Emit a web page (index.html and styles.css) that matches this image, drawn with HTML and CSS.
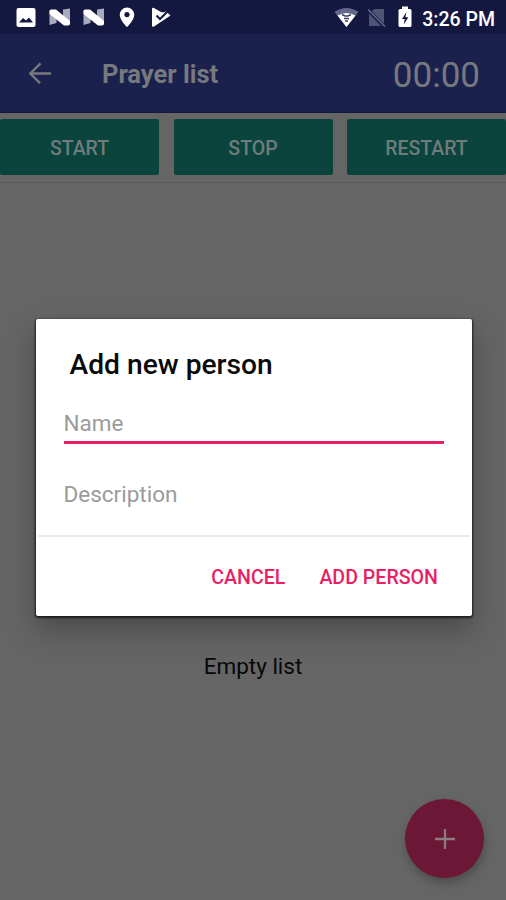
FILE: index.html
```html
<!DOCTYPE html>
<html lang="en">
<head>
<meta charset="utf-8">
<title>Prayer list</title>
<link rel="stylesheet" href="styles.css">
</head>
<body>
<div class="screen">
  <header class="status">
    <svg class="status-icons" width="176" height="34" viewBox="0 0 176 34" aria-hidden="true">
      <path fill="#fff" fill-rule="evenodd" d="M18.500 8h15q2 0 2 2v15q0 2-2 2h-15q-2 0-2-2V10q0-2 2-2zm.5 14.500h14l-4-5-3 3-3-2.500z"/>
      <g id="n"><path fill="#a8aabd" d="M49.500 11l7 3v9l-7 2zM63 9.500l7-1v14l-7-3z"/><path fill="#fff" d="M49.500 11q0-1.500 1.500-1.500h5L70 21v2.500q0 2-2 2h-4L49.500 14z"/></g>
      <use href="#n" x="34"/>
      <path fill="#fff" fill-rule="evenodd" d="M127 7.500a7.300 7.300 0 0 0-7.300 7.300c0 5.200 7.300 12.400 7.300 12.400s7.300-7.200 7.300-12.400a7.300 7.300 0 0 0-7.300-7.300zm0 4.500a2.600 2.600 0 1 1 0 5.200 2.600 2.600 0 0 1 0-5.200z"/>
      <path fill="#fff" d="M152 9q0-2 2-1l6 3.500 3 1 3-1 4.500 4-16.500 11q-2 1-2-1z"/>
      <path fill="none" stroke="#141840" stroke-width="2" d="M156.500 15.500l3.500 3.500 7.500-7.500"/>
    </svg>
    <div class="status-right">
      <svg width="84" height="34" viewBox="0 0 84 34" aria-hidden="true">
        <path fill="#62668a" d="M1.500 12q12-8 24 0L13.500 27z"/>
        <path fill="#fff" d="M4.500 15.500q9-5 18 0L13.500 27z"/>
        <path fill="none" stroke="#3c4060" stroke-width="1.400" d="M9 14.500l3 1.500h3l3-1.500M11 18.500h5M12 21h3"/>
        <path fill="#505474" d="M42 9h9v14.500L38.500 11zM36 13.500L48 26H36z"/>
        <path fill="none" stroke="#62668a" stroke-width="1.700" d="M35 9.500L52 26.500"/>
        <path fill="#fff" d="M69 6.500h6V9h2q1.500 0 1.500 1.500v15q0 1.500-1.500 1.500H67q-1.500 0-1.500-1.500v-15Q65.500 9 67 9h2z"/>
        <path fill="#141840" d="M73.500 12L69 19h2.700l-1 5.500 4.700-7.300h-3z"/>
      </svg>
      <span class="clock">3:26 PM</span>
    </div>
  </header>
  <nav class="bar">
    <svg class="back" width="24" height="24" viewBox="0 0 24 24" fill="none" stroke="#77797f" stroke-width="2.400" aria-hidden="true"><path d="M23 12.500H2.500M12.500 2.300L2.300 12.500l9.700 9.700"/></svg>
    <h1>Prayer list</h1>
    <span class="timer">00:00</span>
  </nav>
  <div class="actions">
    <button>START</button><button>STOP</button><button>RESTART</button>
  </div>
  <main class="content">
    <section class="dialog">
      <h2>Add new person</h2>
      <div class="field name">Name</div>
      <div class="field">Description</div>
      <div class="dialog-actions"><span class="cancel">CANCEL</span><span class="add">ADD PERSON</span></div>
    </section>
    <p class="empty">Empty list</p>
    <div class="fab"><svg width="20" height="20" viewBox="0 0 20 20" aria-hidden="true"><path fill="none" stroke="#8a7d82" stroke-width="2.300" d="M10 0v20M0 10h20"/></svg></div>
  </main>
</div>
</body>
</html>
```
FILE: styles.css
```css
* { box-sizing: border-box; }
body { margin: 0; font-family: Roboto, sans-serif; background: #656565; }
h1, h2, p { margin: 0; }
.screen { width: 506px; height: 900px; display: flex; flex-direction: column; overflow: hidden; background: #656565; }
.status { height: 34px; background: #141840; display: flex; justify-content: space-between; flex: none; }
.status-right { display: flex; padding-right: 11px; }
.status-right svg { margin-right: 5px; }
.clock { color: #fff; font-size: 19.5px; font-weight: 500; line-height: 39px; height: 34px; white-space: nowrap; }
.bar { height: 79px; flex: none; background: #1a214c; display: flex; align-items: center; padding: 0 26px 0 28px; border-bottom: 1px solid #12183e; }
.back { margin-right: 50px; }
h1 { font-size: 25.5px; font-weight: 700; color: #77797f; line-height: 30px; padding-top: 2px; white-space: nowrap; }
.timer { margin-left: auto; font-size: 35px; color: #77797f; padding-top: 4px; }
.actions { flex: none; height: 70px; padding-top: 6px; display: grid; grid-template-columns: repeat(3, 159px); column-gap: 14.500px; border-bottom: 1px solid #595959; }
.actions button { height: 56px; border: 0; padding: 2px 0 0; border-radius: 2px; background: #0a443c; color: #6f7c7a; font: 500 19.5px Roboto, sans-serif; }
.content { flex: 1; display: flex; flex-direction: column; padding-top: 136px; }
.dialog { width: 436px; height: 297px; flex: none; margin-left: 35.500px; background: #fff; border-radius: 2px; box-shadow: 0 1px 2px 1px rgba(0,0,0,.65), 0 14px 30px rgba(0,0,0,.28); }
h2 { margin: 28px 0 0 34px; font-size: 28.200px; line-height: 36px; font-weight: 500; color: #0a0a0a; white-space: nowrap; }
.field { margin: 0 28px; height: 74px; padding-top: 20px; font-size: 22.5px; line-height: 26px; color: #9b9b9b; }
.field.name { height: 42px; margin-top: 19px; margin-bottom: 17px; padding-top: 8px; border-bottom: 3px solid #e91e63; }
.dialog-actions { margin: 0 2px; height: 80px; border-top: 2px solid #ebebeb; display: flex; justify-content: flex-end; padding: 28px 31.500px 0; gap: 34px; font-size: 19.6px; line-height: 26px; font-weight: 500; color: #e91e63; white-space: nowrap; }
.empty { margin-top: 36px; text-align: center; font-size: 22.5px; line-height: 28px; color: #080808; }
.fab { width: 79px; height: 79px; border-radius: 50%; margin: auto 22px 22px auto; background: #6b1735; box-shadow: 1px 5px 8px rgba(0,0,0,.25); display: grid; place-items: center; }
```
